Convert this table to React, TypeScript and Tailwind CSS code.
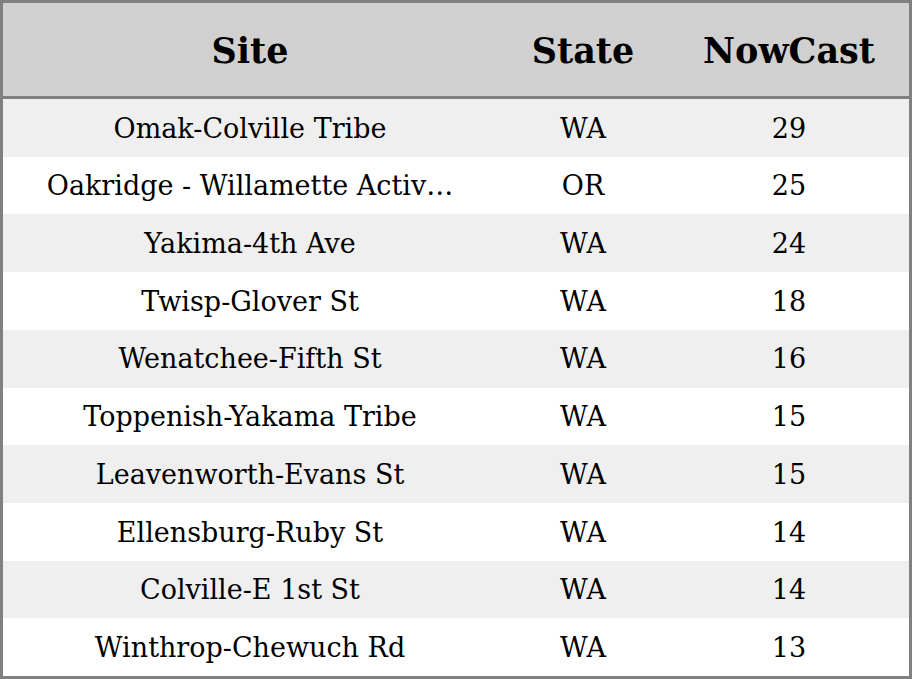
import React from 'react';

const rows: [string, string, number][] = [
  ['Omak-Colville Tribe', 'WA', 29],
  ['Oakridge - Willamette Activ…', 'OR', 25],
  ['Yakima-4th Ave', 'WA', 24],
  ['Twisp-Glover St', 'WA', 18],
  ['Wenatchee-Fifth St', 'WA', 16],
  ['Toppenish-Yakama Tribe', 'WA', 15],
  ['Leavenworth-Evans St', 'WA', 15],
  ['Ellensburg-Ruby St', 'WA', 14],
  ['Colville-E 1st St', 'WA', 14],
  ['Winthrop-Chewuch Rd', 'WA', 13],
];

export default function App() {
  return (
    <div
      className="w-[912px] h-[679px] border-[3px] border-[#808080] bg-white flex flex-col text-black"
      style={{ fontFamily: '"DejaVu Serif", serif' }}
    >
      <div className="h-[96px] shrink-0 bg-[#d0d0d0] border-b-[3px] border-[#808080] flex items-center pt-[3px] text-[35px] font-bold">
        <div className="w-[494px] text-center">Site</div>
        <div className="w-[172px] text-center">State</div>
        <div className="flex-1 text-center">NowCast</div>
      </div>
      <div className="flex-1 flex flex-col">
        {rows.map(([site, state, val], i) => (
          <div
            key={i}
            className={`flex-1 flex items-center pt-[2px] text-[27px] ${i % 2 === 0 ? 'bg-[#efefef]' : 'bg-white'}`}
          >
            <div className="w-[494px] text-center whitespace-nowrap">{site}</div>
            <div className="w-[172px] text-center">{state}</div>
            <div className="flex-1 text-center">{val}</div>
          </div>
        ))}
      </div>
    </div>
  );
}
